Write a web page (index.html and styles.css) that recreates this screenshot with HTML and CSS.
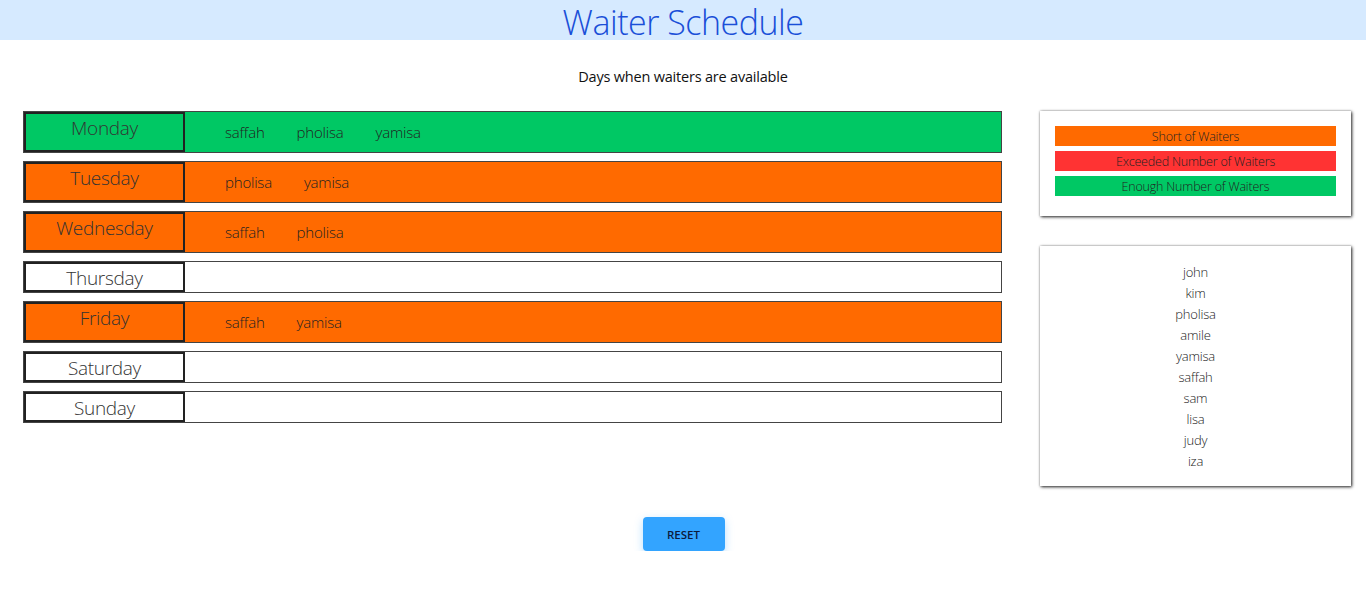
FILE: index.html
```html
<!DOCTYPE html>
<html>
<head>
<meta charset="utf-8">
<title>Waiter Schedule</title>
<link rel="stylesheet" href="styles.css">
</head>
<body>
<header class="top">
  <h1 class="title">Waiter Schedule</h1>
</header>
<p class="subtitle">Days when waiters are available</p>
<main class="layout">
  <section class="days">
    <div class="row enough">
      <div class="day">Monday</div>
      <div class="names"><span>saffah</span><span>pholisa</span><span>yamisa</span></div>
    </div>
    <div class="row short">
      <div class="day">Tuesday</div>
      <div class="names"><span>pholisa</span><span>yamisa</span></div>
    </div>
    <div class="row short">
      <div class="day">Wednesday</div>
      <div class="names"><span>saffah</span><span>pholisa</span></div>
    </div>
    <div class="row">
      <div class="day">Thursday</div>
      <div class="names"></div>
    </div>
    <div class="row short">
      <div class="day">Friday</div>
      <div class="names"><span>saffah</span><span>yamisa</span></div>
    </div>
    <div class="row">
      <div class="day">Saturday</div>
      <div class="names"></div>
    </div>
    <div class="row">
      <div class="day">Sunday</div>
      <div class="names"></div>
    </div>
  </section>
  <aside class="side">
    <div class="card legend">
      <div class="key short">Short of Waiters</div>
      <div class="key exceeded">Exceeded Number of Waiters</div>
      <div class="key enough">Enough Number of Waiters</div>
    </div>
    <div class="card waiters">
      <div>john</div>
      <div>kim</div>
      <div>pholisa</div>
      <div>amile</div>
      <div>yamisa</div>
      <div>saffah</div>
      <div>sam</div>
      <div>lisa</div>
      <div>judy</div>
      <div>iza</div>
    </div>
  </aside>
</main>
<div class="actions">
  <button class="reset">RESET</button>
</div>
</body>
</html>
```
FILE: styles.css
```css
* { box-sizing: border-box; }
body {
  margin: 0;
  font-family: "Open Sans", "Noto Sans", sans-serif;
  font-weight: 300;
  color: #111;
  background: #fff;
}
.top {
  background: #d6eaff;
  height: 40px;
  text-align: center;
}
.title {
  margin: 0;
  padding-top: 1px;
  font-size: 34px;
  font-weight: 300;
  color: #1a4fd8;
  line-height: 42px;
  letter-spacing: -0.5px;
}
.subtitle {
  margin: 27px 0 0;
  text-align: center;
  font-size: 14.5px;
  font-weight: 400;
  line-height: 20px;
  letter-spacing: -0.2px;
}
.layout {
  display: flex;
  align-items: flex-start;
  gap: 38px;
  padding: 0 15px 0 23px;
  margin-top: 24px;
}
.days {
  width: 979px;
  display: flex;
  flex-direction: column;
  gap: 8px;
}
.row {
  display: flex;
  border: 1px solid #444;
  background: #fff;
}
.row.enough { background: #00c864; }
.row.short { background: #ff6a00; }
.day {
  width: 161px;
  flex: none;
  border: 2px solid #222;
  padding-top: 2px;
  text-align: center;
  font-size: 19px;
  line-height: 24px;
  color: #333;
  letter-spacing: -0.3px;
}
.names {
  padding-left: 24px;
  display: flex;
}
.names span {
  padding: 10px 16px;
  font-size: 15px;
  line-height: 20px;
  color: #222;
  letter-spacing: -0.2px;
}
.side {
  width: 311px;
  display: flex;
  flex-direction: column;
  gap: 30px;
}
.card {
  background: #fff;
  box-shadow: 1px 1px 3px rgba(0,0,0,0.85), 0 0 2px rgba(0,0,0,0.25);
}
.legend {
  padding: 15px 15px 20px;
  display: flex;
  flex-direction: column;
  gap: 5px;
}
.key {
  height: 20px;
  line-height: 22px;
  text-align: center;
  font-size: 12.5px;
  color: #222;
  letter-spacing: -0.2px;
}
.key.short { background: #ff6a00; }
.key.exceeded { background: #ff3333; }
.key.enough { background: #00c864; }
.waiters {
  height: 240px;
  padding-top: 16px;
  text-align: center;
  font-size: 13px;
  line-height: 21px;
  color: #222;
  letter-spacing: -0.2px;
}
.actions {
  display: flex;
  justify-content: center;
  padding-top: 31px;
  padding-left: 1px;
}
.reset {
  width: 82px;
  height: 34px;
  border: none;
  border-radius: 4px;
  background: #33a4ff;
  color: #0b1a3c;
  font-family: "Open Sans", sans-serif;
  font-weight: 600;
  font-size: 11.5px;
  box-shadow: 0 3px 8px rgba(51,164,255,0.35);
  cursor: pointer;
}
```
